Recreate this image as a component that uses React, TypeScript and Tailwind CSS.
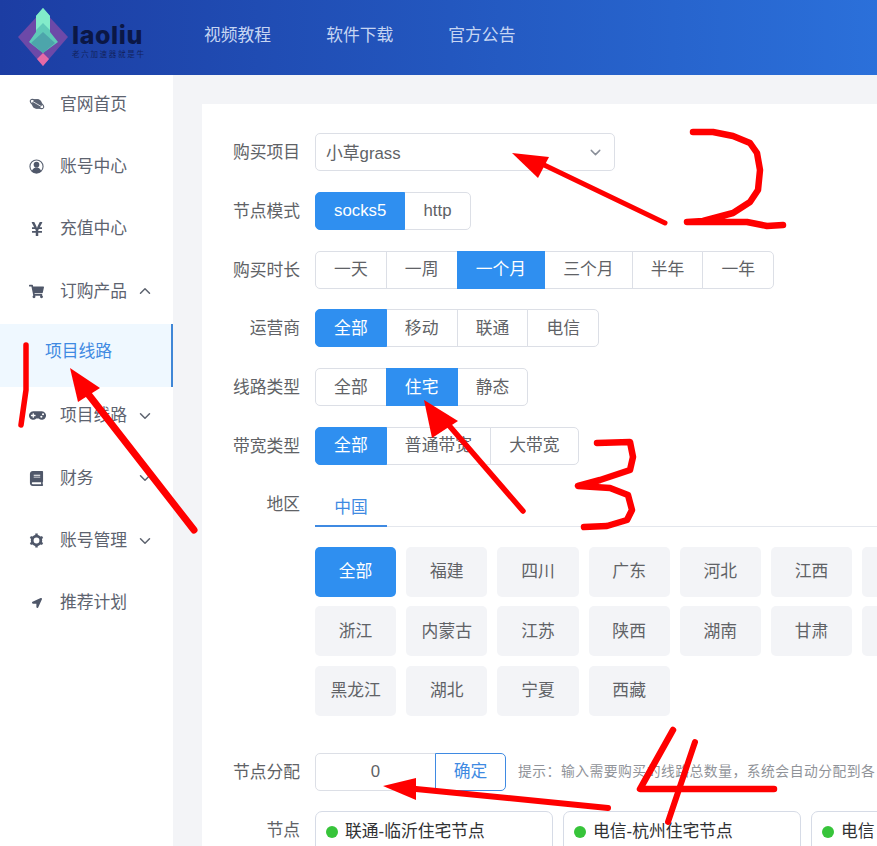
import React from "react";
import { FaShoppingCart, FaGamepad, FaBook, FaLocationArrow, FaYenSign } from "react-icons/fa";
import { LuChevronDown, LuChevronUp } from "react-icons/lu";

function Planet() {
  return (
    <svg viewBox="0 0 16 16" className="w-[16px] h-[16px]">
      <ellipse cx="8" cy="8" rx="7.500" ry="3" transform="rotate(30 8 8)" fill="none" stroke="#5a6272" strokeWidth="1" />
      <circle cx="8" cy="8" r="5" fill="#5a6272" />
      <path d="M2 4.500 L14 11.500" stroke="#fff" strokeWidth="0.8" />
    </svg>
  );
}

function UserIcon() {
  return (
    <svg viewBox="0 0 16 16" className="w-[15px] h-[15px]">
      <circle cx="8" cy="8" r="7" fill="#fff" stroke="#5a6272" strokeWidth="1.200" />
      <circle cx="8" cy="6" r="3" fill="#4f5769" />
      <path d="M3 13.500c.5-3.500 3-4.500 5-4.500s4.500 1 5 4.500c-1.500 1-3 1.500-5 1.500s-3.500-.5-5-1.500z" fill="#4f5769" />
    </svg>
  );
}

function GearIcon() {
  return (
    <svg viewBox="0 0 16 16" className="w-[15px] h-[15px]">
      <circle cx="8" cy="8" r="4.600" fill="none" stroke="#4f5769" strokeWidth="3" />
      <g stroke="#4f5769" strokeWidth="2.600">
        <line x1="8" y1="0.500" x2="8" y2="3" />
        <line x1="8" y1="13" x2="8" y2="15.500" />
        <line x1="1.500" y1="4.200" x2="3.700" y2="5.500" />
        <line x1="12.300" y1="10.500" x2="14.500" y2="11.800" />
        <line x1="1.500" y1="11.800" x2="3.700" y2="10.500" />
        <line x1="12.300" y1="5.500" x2="14.500" y2="4.200" />
      </g>
    </svg>
  );
}

function Logo() {
  return (
    <div className="flex items-center h-[75px] w-[204px] pl-[17px] shrink-0">
      <svg viewBox="0 0 52 60" className="w-[52px] h-[60px] shrink-0">
        <polygon points="26,2 51,29 26,58 1,29" fill="#6d49a8" />
        <polygon points="26,45 32,51 26,58 20,51" fill="#e56aa6" />
        <polygon points="26,0 33,8 33,24 41,34 26,45 12,34 19,24 19,8" fill="#5fcab8" />
        <polygon points="26,0 33,8 33,22 26,15 19,22 19,8" fill="#82ecca" />
        <polygon points="26,24 38,35 26,45 14,35" fill="#4da5ab" />
      </svg>
      <div className="ml-[3px] mt-[7px] flex flex-col">
        <span className="font-['Inter',sans-serif] text-[25px] leading-[26px] font-extrabold tracking-[0.6px] text-[#0b1745]">laoliu</span>
        <span className="text-[7.500px] leading-[10px] mt-[2px] tracking-[1.700px] text-[#12235f] whitespace-nowrap">老六加速器就是牛</span>
      </div>
    </div>
  );
}

function Header() {
  return (
    <header className="h-[75px] flex items-center bg-gradient-to-r from-[#1c3da3] to-[#2b70da] shrink-0">
      <Logo />
      <nav className="flex gap-[55px] text-[16.8px] text-[#c6d5f2] -mt-[3px]">
        <span>视频教程</span>
        <span>软件下载</span>
        <span>官方公告</span>
      </nav>
    </header>
  );
}

function MenuItem({ icon, label, chevron }: { icon: React.ReactNode; label: string; chevron?: "up" | "down" }) {
  return (
    <div className="h-[62.4px] pb-[4px] flex items-center text-[16.8px] text-[#5d636f]">
      <span className="w-[60px] pl-[29px] flex items-center text-[#4f5769] text-[15px]">{icon}</span>
      <span className="w-[76px] whitespace-nowrap">{label}</span>
      {chevron === "up" && <LuChevronUp className="w-[18px] h-[18px]" />}
      {chevron === "down" && <LuChevronDown className="w-[18px] h-[18px]" />}
    </div>
  );
}

function Sidebar() {
  return (
    <aside className="w-[173px] bg-white shrink-0">
      <MenuItem icon={<Planet />} label="官网首页" />
      <MenuItem icon={<UserIcon />} label="账号中心" />
      <MenuItem icon={<FaYenSign className="text-[16px]" />} label="充值中心" />
      <MenuItem icon={<FaShoppingCart />} label="订购产品" chevron="up" />
      <div className="h-[63px] -mt-[1px] pb-[7px] pl-[45px] flex items-center text-[16.8px] text-[#3f8ae2] bg-[#eff8ff] border-r-2 border-[#3f86d6]">项目线路</div>
      <MenuItem icon={<FaGamepad className="text-[17px]" />} label="项目线路" chevron="down" />
      <MenuItem icon={<FaBook />} label="财务" chevron="down" />
      <MenuItem icon={<GearIcon />} label="账号管理" chevron="down" />
      <MenuItem icon={<FaLocationArrow className="text-[10px] ml-[3px]" />} label="推荐计划" />
    </aside>
  );
}

function Row({ label, children, className = "mb-[20.8px]" }: { label: string; children: React.ReactNode; className?: string }) {
  return (
    <div className={`flex items-center ${className}`}>
      <span className="w-[67px] pt-[1px] text-right text-[16.8px] text-[#606266] shrink-0 whitespace-nowrap">{label}</span>
      <div className="ml-[15px] flex items-center">{children}</div>
    </div>
  );
}

function Group({ items, active }: { items: string[]; active: string }) {
  return (
    <div className="flex h-[38px]">
      {items.map((it, i) => (
        <span
          key={it}
          className={`h-[38px] px-[18.1px] flex items-center text-[16.8px] border whitespace-nowrap ${i > 0 ? "-ml-px" : ""} ${i === 0 ? "rounded-l-[5px]" : ""} ${i === items.length - 1 ? "rounded-r-[5px]" : ""} ${
            it === active ? "bg-[#2f8ff0] border-[#2f8ff0] text-white relative" : "bg-white border-[#dcdfe6] text-[#606266]"
          }`}
        >
          {it}
        </span>
      ))}
    </div>
  );
}

const regions = ["全部", "福建", "四川", "广东", "河北", "江西", "", "浙江", "内蒙古", "江苏", "陕西", "湖南", "甘肃", "", "黑龙江", "湖北", "宁夏", "西藏"];

function NodeCard({ name }: { name: string }) {
  return (
    <div className="w-[237.500px] h-[60px] shrink-0 border border-[#d6dbe6] rounded-[7px] px-[10px] pt-[8px] flex items-start">
      <span className="flex items-center text-[16.8px] text-[#303133] leading-[24px] whitespace-nowrap">
        <span className="w-[12px] h-[12px] rounded-full bg-[#37c43a] mr-[7px]" />
        {name}
      </span>
    </div>
  );
}

function Card() {
  return (
    <section className="w-[900px] bg-white pt-[29px] pl-[31px] h-[800px] shrink-0">
      <Row label="购买项目">
        <div className="w-[300px] h-[38px] border border-[#dcdfe6] rounded-[5px] flex items-center justify-between pl-[10px] pr-[10px] text-[16.8px] text-[#606266]">
          <span className="pt-[4px]">小草grass</span>
          <LuChevronDown className="w-[17px] h-[17px] text-[#8a8f99]" />
        </div>
      </Row>
      <Row label="节点模式"><Group items={["socks5", "http"]} active="socks5" /></Row>
      <Row label="购买时长"><Group items={["一天", "一周", "一个月", "三个月", "半年", "一年"]} active="一个月" /></Row>
      <Row label="运营商"><Group items={["全部", "移动", "联通", "电信"]} active="全部" /></Row>
      <Row label="线路类型"><Group items={["全部", "住宅", "静态"]} active="住宅" /></Row>
      <Row label="带宽类型" className="mb-[22px]"><Group items={["全部", "普通带宽", "大带宽"]} active="全部" /></Row>

      <div className="flex items-start">
        <span className="w-[67px] h-[36px] flex items-center justify-end text-[16.8px] text-[#606266] shrink-0">地区</span>
        <div className="ml-[15px] w-[600px]">
          <div className="h-[40px] border-b border-[#e4e7ed] flex">
            <span className="w-[72px] h-[40px] pt-[3px] border-b-2 border-[#3f8ae2] flex items-center justify-center text-[16.8px] text-[#3f8ae2]">中国</span>
          </div>
          <div className="mt-[20px] grid grid-cols-[repeat(7,81.2px)] gap-x-[10px] gap-y-[9.5px]">
            {regions.map((r, i) => (
              <span
                key={i}
                className={`h-[50px] rounded-[5px] flex items-center justify-center text-[16.8px] whitespace-nowrap ${i === 0 ? "bg-[#2f8ff0] text-white" : "bg-[#f3f4f7] text-[#606266]"}`}
              >
                {r}
              </span>
            ))}
          </div>
        </div>
      </div>

      <Row label="节点分配" className="mt-[37px] mb-[20px]">
        <div className="w-[121px] h-[38px] border border-[#dcdfe6] rounded-l-[5px] flex items-center justify-center text-[16.8px] text-[#606266]">0</div>
        <div className="w-[71px] h-[38px] -ml-px border border-[#3f8ae2] rounded-r-[5px] flex items-center justify-center text-[16.8px] text-[#3f8ae2]">确定</div>
        <span className="ml-[12px] text-[13.8px] tracking-[0.5px] text-[#909399] whitespace-nowrap">提示：输入需要购买的线路总数量，系统会自动分配到各</span>
      </Row>
      <div className="flex items-start">
        <span className="w-[67px] h-[40px] flex items-center justify-end text-[16.8px] text-[#606266] shrink-0">节点</span>
        <div className="ml-[15px] flex gap-[10.500px]">
          <NodeCard name="联通-临沂住宅节点" />
          <NodeCard name="电信-杭州住宅节点" />
          <NodeCard name="电信" />
        </div>
      </div>
    </section>
  );
}

function Annotations() {
  const red = "#ff0000";
  const common = { fill: "none", stroke: red, strokeLinecap: "round" as const, strokeLinejoin: "round" as const };
  return (
    <svg viewBox="0 0 877 846" className="absolute inset-0 w-[877px] h-[846px] pointer-events-none">
      <polyline {...common} strokeWidth="5.5" points="26,345 26,390 21,425" />
      <line {...common} strokeWidth="7" x1="194" y1="530" x2="85" y2="390" />
      <polygon fill={red} points="70,368 100,388 78,402" />

      <line {...common} strokeWidth="5" x1="665" y1="223" x2="540" y2="163" />
      <polygon fill={red} points="512,153 549,157 538,178" />
      <polyline {...common} strokeWidth="6.5" points="693,132 713,132 733,136 750,143 757,153 760,170 758,190 750,202 733,213 703,221 687,222 747,222 767,226 783,225" />

      <line {...common} strokeWidth="5.5" x1="523" y1="511" x2="440" y2="415" />
      <polygon fill={red} points="424,400 458,421 432,438" />
      <polyline {...common} strokeWidth="6.5" points="597,443 630,442 633,457 630,470 600,480 578,486 610,488 628,495 632,510 627,520 607,526 584,527" />

      <line {...common} strokeWidth="6" x1="608" y1="808" x2="416" y2="789" />
      <polygon fill={red} points="383,786 416,778 416,800" />
      <polyline {...common} strokeWidth="6.5" points="673,730 640,789 774,789" />
      <line {...common} strokeWidth="6" x1="695" y1="742" x2="668" y2="822" />
    </svg>
  );
}

export default function App() {
  return (
    <div className="relative w-[877px] h-[846px] overflow-hidden bg-[#f3f4f7] flex flex-col font-['Liberation_Sans','Noto_Sans_CJK_SC',sans-serif]">
      <Header />
      <div className="flex flex-1 min-h-0">
        <Sidebar />
        <main className="flex-1 min-w-0 pt-[29px] pl-[29px] overflow-hidden">
          <Card />
        </main>
      </div>
      <Annotations />
    </div>
  );
}
